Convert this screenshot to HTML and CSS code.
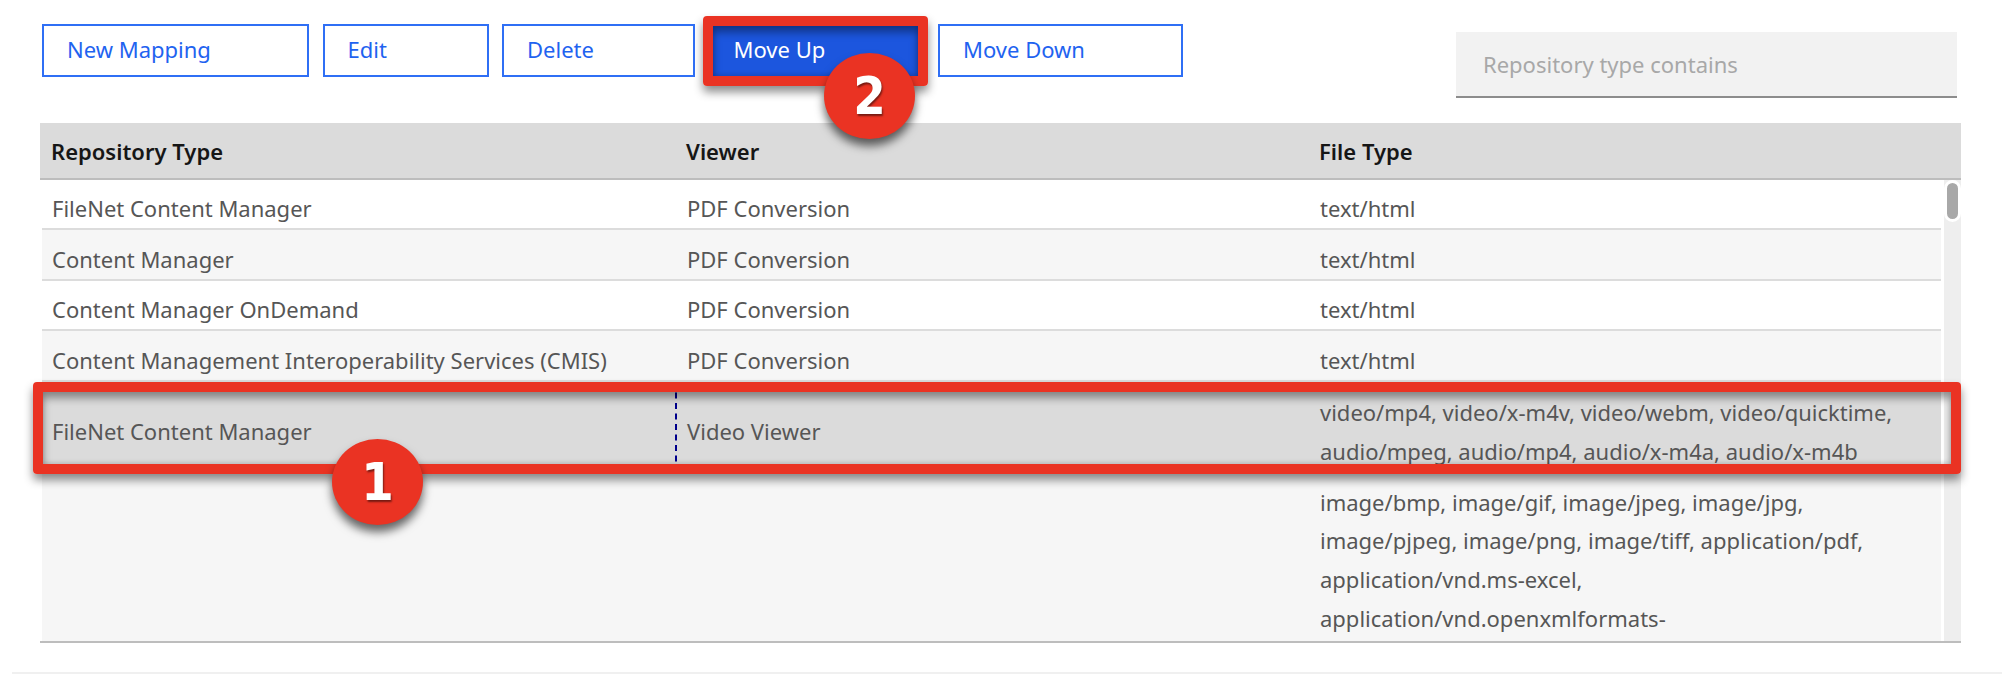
FILE: index.html

```html
<html lang="en">
<head>
  <meta charset="UTF-8">
  <title>Viewer Mappings</title>
  <link rel="stylesheet" href="styles.css">
</head>
<body>
  <div class="page">
    <div class="toolbar">
      <div class="actions">
        <button class="btn">New Mapping</button>
        <button class="btn">Edit</button>
        <button class="btn">Delete</button>
        <button class="btn btn-active">Move Up</button>
        <button class="btn">Move Down</button>
      </div>
      <input class="filter" type="text" placeholder="Repository type contains">
    </div>

    <div class="table">
      <div class="row head">
        <div class="cell">Repository Type</div>
        <div class="cell">Viewer</div>
        <div class="cell">File Type</div>
      </div>
      <div class="table-body">
        <div class="rows">
          <div class="row">
            <div class="cell">FileNet Content Manager</div>
            <div class="cell">PDF Conversion</div>
            <div class="cell">text/html</div>
          </div>
          <div class="row alt">
            <div class="cell">Content Manager</div>
            <div class="cell">PDF Conversion</div>
            <div class="cell">text/html</div>
          </div>
          <div class="row">
            <div class="cell">Content Manager OnDemand</div>
            <div class="cell">PDF Conversion</div>
            <div class="cell">text/html</div>
          </div>
          <div class="row alt">
            <div class="cell">Content Management Interoperability Services (CMIS)</div>
            <div class="cell">PDF Conversion</div>
            <div class="cell">text/html</div>
          </div>
          <div class="row selected">
            <div class="cell focus">FileNet Content Manager</div>
            <div class="cell focus focus-strong">Video Viewer</div>
            <div class="cell">video/mp4, video/x-m4v, video/webm, video/quicktime, audio/mpeg, audio/mp4, audio/x-m4a, audio/x-m4b</div>
          </div>
          <div class="row alt last">
            <div class="cell"></div>
            <div class="cell"></div>
            <div class="cell">image/bmp, image/gif, image/jpeg, image/jpg, image/pjpeg, image/png, image/tiff, application/pdf, application/vnd.ms-excel, application/vnd.openxmlformats-</div>
          </div>
        </div>
        <div class="scrollbar"><div class="thumb"></div></div>
      </div>
    </div>
    <div class="footer-line"></div>

    <!-- callouts drawn over the screen -->
    <div class="callout callout-row"></div>
    <div class="callout callout-btn"></div>
    <div class="marker marker-1">1</div>
    <div class="marker marker-2">2</div>
  </div>
</body>
</html>
```

FILE: styles.css

```css
body {
  margin: 0;
  background-color: #fff;
  font-family: "Noto Sans", sans-serif;
  font-size: 22px;
  color: #565656;
}

.page {
  position: relative;
  height: 680px;
  overflow: hidden;
}

.toolbar {
  display: flex;
  justify-content: space-between;
  align-items: flex-start;
  padding: 24px 45px 0 42px;
  height: 99px;
}

.actions {
  display: grid;
  grid-template-columns: 267px 166px 193px 216px 245px;
  gap: 13.5px;
}

.btn {
  height: 53px;
  padding: 0 0 3px 23px;
  border: 2px solid #2f6ff5;
  background-color: #fff;
  color: #1f63f0;
  font-family: inherit;
  font-size: 22px;
  text-align: left;
  cursor: pointer;
}

.btn-active {
  background-color: #1c56de;
  border-color: #1c56de;
  color: #fff;
}

.filter {
  box-sizing: border-box;
  width: 501px;
  height: 66px;
  margin-top: 8px;
  padding: 0 27px;
  border: 0;
  border-bottom: 2px solid #8d8d8d;
  background-color: #f2f2f2;
  font-family: inherit;
  font-size: 22px;
}

.filter::placeholder {
  color: #a8a8a8;
}

.table {
  margin-left: 40px;
  width: 1921px;
}

.row {
  display: grid;
  grid-template-columns: 635px 633px 1fr;
}

.head {
  box-sizing: border-box;
  height: 57px;
  align-items: center;
  background-color: #dbdbdb;
  border-bottom: 2px solid #bdbdbd;
  color: #161616;
  font-weight: 600;
}

.head .cell {
  padding: 0 11px;
}

.table-body {
  box-sizing: border-box;
  display: flex;
  height: 463px;
  overflow: hidden;
  border-bottom: 2px solid #bdbdbd;
}

.rows {
  flex: 1;
  padding: 0 3px 0 2px;
}

.rows .row {
  box-sizing: border-box;
  min-height: 50.4px;
  align-items: center;
  border-bottom: 2px solid #dcdcdc;
}

.rows .cell {
  padding: 9px 10px 0;
  line-height: 38.7px;
}

.alt {
  background-color: #f6f6f6;
}

.selected {
  background-color: #dbdbdb;
}

.rows .selected {
  height: 90px;
  border-bottom: 0;
}

.rows .selected .cell {
  padding-top: 10px;
}

.rows .last {
  align-items: start;
  border-bottom: 0;
  height: 200px;
}

.rows .last .cell {
  padding-top: 11px;
}

.rows .selected .cell:last-child,
.rows .last .cell:last-child {
  padding-right: 36px;
}

.focus {
  align-self: stretch;
  display: flex;
  align-items: center;
  margin-left: -1px;
  border-left: 1px dashed #00008b;
}

.focus-strong {
  margin-left: -2px;
  border-left-width: 2px;
}

.scrollbar {
  width: 17px;
  background-color: #eeeeee;
}

.thumb {
  box-sizing: border-box;
  width: 17px;
  height: 42px;
  background-color: #a8a8a8;
  border: 3px solid #fff;
  border-radius: 9px;
}

.footer-line {
  margin: 29px 0 0 12px;
  height: 2px;
  background-color: #f0f0f0;
}

.callout {
  position: absolute;
  box-sizing: border-box;
  border: 10px solid #ea3323;
  border-radius: 4px;
  box-shadow: 0 6px 10px rgba(0, 0, 0, 0.45), inset 0 6px 8px rgba(0, 0, 0, 0.4), inset 0 -2px 4px rgba(0, 0, 0, 0.12);
}

.callout-row {
  left: 33px;
  top: 382px;
  width: 1928px;
  height: 92px;
}

.callout-btn {
  left: 703px;
  top: 16px;
  width: 225px;
  height: 70px;
}

.marker {
  position: absolute;
  width: 91px;
  height: 86px;
  border-radius: 50%;
  background-color: #ea3323;
  color: #fff;
  font-family: "DejaVu Sans Condensed", "DejaVu Sans", sans-serif;
  font-size: 52px;
  font-weight: bold;
  line-height: 86px;
  text-align: center;
  text-shadow: 1px 2px 2px rgba(0, 0, 0, 0.5);
  box-shadow: 0 7px 10px rgba(0, 0, 0, 0.6);
}

.marker-1 {
  left: 332px;
  top: 439px;
}

.marker-2 {
  left: 824px;
  top: 53px;
}
```
